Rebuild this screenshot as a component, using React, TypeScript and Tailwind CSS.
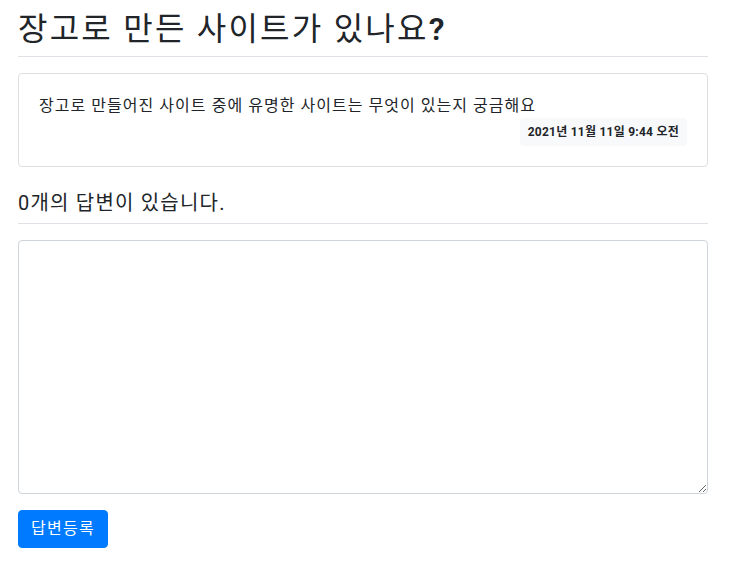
import React, { useState } from 'react';

const font = { fontFamily: 'Roboto, "Noto Sans CJK KR", "Noto Sans", sans-serif' };

export default function App() {
    const [content, setContent] = useState('');

    return (
        <div className="min-h-screen bg-white text-[#212529] pt-[2px]" style={font}>
            <div className="w-[690px] ml-[18px]">
                {/* Question title */}
                <h2 className="border-b border-[#dee2e6] py-2 text-[32px] leading-[1.2] font-normal tracking-[0.07em]">
                    장고로 만든 사이트가 있나요<span className="font-semibold tracking-normal">?</span>
                </h2>

                {/* Question card */}
                <div className="my-4 border border-[#dfdfdf] rounded bg-white">
                    <div className="p-5">
                        <div className="text-base leading-6 whitespace-pre-wrap tracking-[0.065em]">
                            장고로 만들어진 사이트 중에 유명한 사이트는 무엇이 있는지 궁금해요
                        </div>
                        <div className="flex justify-end">
                            <div className="bg-[#f8f9fa] rounded p-2 text-xs leading-3 font-bold text-[#212529] tracking-[0.02em]">
                                2021년 11월 11일 9:44 오전
                            </div>
                        </div>
                    </div>
                </div>

                {/* Answer count */}
                <h5 className="border-b border-[#dee2e6] py-2 text-xl leading-6 font-normal tracking-[0.06em]">
                    0개의 답변이 있습니다.
                </h5>

                {/* Answer form */}
                <form className="mt-4" onSubmit={e => e.preventDefault()}>
                    <textarea
                        name="content"
                        rows={10}
                        value={content}
                        onChange={e => setContent(e.target.value)}
                        className="block w-full border border-[#ced4da] rounded px-3 py-1.5 text-base leading-6 outline-none focus:border-[#80bdff]"
                    />
                    <button
                        type="submit"
                        className="mt-4 bg-[#007bff] hover:bg-[#0069d9] text-white text-base leading-6 px-3 py-1.5 border border-[#007bff] rounded tracking-[0.08em]"
                    >
                        답변등록
                    </button>
                </form>
            </div>
        </div>
    );
}
